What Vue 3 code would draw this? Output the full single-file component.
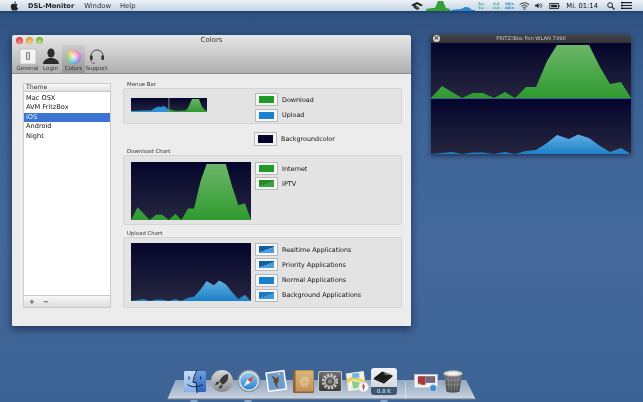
<script setup>
const dl = [[0,55],[11,43],[31,55],[42,50],[52,50],[63,55],[74,49],[84,55],[95,44],[105,44],[116,18],[126,2],[158,2],[169,24],[179,41],[190,39],[200,55]]
const ul = [[0,55],[21,53],[31,55],[42,53.5],[52,53.5],[63,55],[74,53],[84,55],[95,52],[105,51],[116,44],[126,36],[138,40],[147,35.5],[158,39],[169,47],[179,53],[190,49],[200,55]]
const area = (pts) => pts.map((p) => p.join(',')).join(' ')
const dlArea = area(dl)
const ulArea = area(ul)
const tools = [
  { id: 'general', label: 'General' },
  { id: 'login', label: 'Login' },
  { id: 'colors', label: 'Colors', active: true },
  { id: 'support', label: 'Support' }
]
const themes = ['Mac OSX', 'AVM FritzBox', 'iOS', 'Android', 'Night']
const dlLegend = [
  { t: 'Internet', c: 'green' },
  { t: 'IPTV', c: 'green-diag' }
]
const ulLegend = [
  { t: 'Realtime Applications', c: 'blue-diag' },
  { t: 'Priority Applications', c: 'blue-diag' },
  { t: 'Normal Applications', c: 'blue' },
  { t: 'Background Applications', c: 'blue-soft' }
]
</script>

<template>
  <div class="desktop">
    <svg class="defs" width="0" height="0" aria-hidden="true">
      <defs>
        <linearGradient id="night" x1="0" y1="0" x2="0" y2="1"><stop offset="0" stop-color="#05052c"/><stop offset="1" stop-color="#26263f"/></linearGradient>
        <linearGradient id="gr" x1="0" y1="0" x2="0" y2="1"><stop offset="0" stop-color="#6cb668"/><stop offset="1" stop-color="#2f9a30"/></linearGradient>
        <linearGradient id="bl" x1="0" y1="0" x2="0" y2="1"><stop offset="0" stop-color="#62ade2"/><stop offset="1" stop-color="#1c80c8"/></linearGradient>
        <linearGradient id="silver" x1="0" y1="0" x2="0" y2="1"><stop offset="0" stop-color="#d8d8d8"/><stop offset="1" stop-color="#8a8a8a"/></linearGradient>
        <linearGradient id="trash" x1="0" y1="0" x2="0" y2="1"><stop offset="0" stop-color="#777"/><stop offset="1" stop-color="#4a4a4a"/></linearGradient>
        <linearGradient id="faceL" x1="0" y1="0" x2="0" y2="1"><stop offset="0" stop-color="#c6dcf4"/><stop offset="1" stop-color="#86b2e6"/></linearGradient>
        <linearGradient id="faceR" x1="0" y1="0" x2="0" y2="1"><stop offset="0" stop-color="#6d9fe0"/><stop offset="1" stop-color="#2a64bc"/></linearGradient>
        <linearGradient id="sky" x1="0" y1="0" x2="0" y2="1"><stop offset="0" stop-color="#8fd0f4"/><stop offset="1" stop-color="#2a7fd0"/></linearGradient>
        <linearGradient id="book" x1="0" y1="0" x2="0" y2="1"><stop offset="0" stop-color="#dcb67c"/><stop offset="1" stop-color="#c1935a"/></linearGradient>
        <linearGradient id="prefs" x1="0" y1="0" x2="0" y2="1"><stop offset="0" stop-color="#6c6c6c"/><stop offset="1" stop-color="#3c3c3c"/></linearGradient>
      </defs>
    </svg>

    <header class="menubar">
      <div class="menu-left">
        <svg class="apple" viewBox="0 0 14 16"><path d="M10.400 8.500c0-1.700 1.400-2.500 1.500-2.600-.8-1.200-2.100-1.300-2.500-1.400-1-.1-2 .6-2.600.6s-1.400-.6-2.300-.6C3.300 4.500 2.200 5.200 1.600 6.300.3 8.500 1.300 11.800 2.500 13.600c.6.9 1.300 1.900 2.300 1.800.9 0 1.300-.6 2.400-.6s1.400.6 2.400.6 1.600-.9 2.200-1.800c.7-1 1-2 1-2.100-.1 0-2.400-.9-2.400-3zM8.600 3.300C9.100 2.700 9.500 1.800 9.400.9c-.8 0-1.700.5-2.300 1.200C6.600 2.700 6.200 3.500 6.300 4.400c.9.100 1.800-.4 2.300-1.100z" fill="#222"/></svg>
        <span class="app">DSL-Monitor</span>
        <span>Window</span>
        <span>Help</span>
      </div>
      <div class="menu-right">
        <svg class="m-i1" viewBox="0 0 12 8"><path d="M0 3 6 0l6 3-2 1.200L6 2.200 4 3.200l4 2L6 6.500z M2 5l4 3 3-1.800" fill="#222"/></svg>
        <svg class="m-chart" viewBox="0 0 24 11" preserveAspectRatio="none"><polygon points="0,11 0,9 6,8 9,8 12,1 17,1 20,8 24,9 24,11" fill="#35a038"/></svg>
        <svg class="m-chart m-chart2" viewBox="0 0 24 11" preserveAspectRatio="none"><polygon points="0,11 0,10 10,9 14,7 18,7.500 21,10 24,10 24,11" fill="#2a87d0"/></svg>
        <span class="rates rates-a"><i>Rx:</i><i>Tx:</i></span>
        <span class="rates rates-b"><i>0.0</i><i>0.0</i></span>
        <span class="rates rates-c"><i>KB/s</i><i>KB/s</i></span>
        <svg class="m-wifi" viewBox="0 0 12 9"><path d="M.6 3a8 8 0 0 1 10.800 0M2.400 4.900a5.300 5.300 0 0 1 7.200 0M4.200 6.700a2.600 2.600 0 0 1 3.600 0" fill="none" stroke="#222" stroke-width="1"/><circle cx="6" cy="8.200" r=".8" fill="#222"/></svg>
        <svg class="m-vol" viewBox="0 0 9 8"><path d="M0 3h1.500L4 1v6L1.500 5H0z" fill="#222"/><path d="M5 2.500a2 2 0 0 1 0 3M6.500 1.300a3.800 3.800 0 0 1 0 5.400" fill="none" stroke="#222" stroke-width=".8"/></svg>
        <svg class="m-bat" viewBox="0 0 12 7"><rect x=".5" y=".5" width="10" height="6" fill="none" stroke="#222"/><rect x="2" y="2" width="7" height="3" fill="#222"/><rect x="11" y="2.500" width="1" height="2" fill="#222"/></svg>
        <span class="clock">Mi. 01:14</span>
        <svg class="m-search" viewBox="0 0 9 9"><circle cx="3.500" cy="3.500" r="2.700" fill="none" stroke="#222" stroke-width="1.100"/><path d="M5.500 5.500 8.500 8.500" stroke="#222" stroke-width="1.400"/></svg>
        <svg class="m-list" viewBox="0 0 11 7"><path d="M0 .6h11M0 3.500h11M0 6.400h11" stroke="#222" stroke-width="1.100"/><path d="M0 .6h2M0 3.500h2M0 6.400h2" stroke="#000" stroke-width="1.300"/></svg>
      </div>
    </header>

    <section class="window">
      <div class="chrome">
        <div class="titlebar">
          <span class="light red"></span><span class="light amber"></span><span class="light lime"></span>
          <span class="title">Colors</span>
        </div>
        <nav class="toolbar">
          <div v-for="t in tools" :key="t.id" class="tool" :class="{ active: t.active }">
            <svg v-if="t.id === 'general'" class="tool-ic" viewBox="0 0 20 17">
              <rect x="2" y="1" width="16" height="15" rx="1.500" fill="#f3f3f3" stroke="#b0b0b0" stroke-width=".6"/>
              <rect x="8.500" y="4.500" width="3" height="7" rx=".5" fill="#ddd" stroke="#555" stroke-width=".7"/>
            </svg>
            <svg v-else-if="t.id === 'login'" class="tool-ic" viewBox="0 0 20 17">
              <ellipse cx="10" cy="5" rx="3.600" ry="4.600" fill="#2c2c2c"/>
              <path d="M2 16c.4-4 3.400-5 6-6h4c2.600 1 5.600 2 6 6z" fill="#2c2c2c"/>
            </svg>
            <span v-else-if="t.id === 'colors'" class="wheel"></span>
            <svg v-else class="tool-ic" viewBox="0 0 20 17">
              <path d="M4 8a6 6 0 0 1 12 0" fill="none" stroke="#333" stroke-width=".9"/>
              <rect x="3" y="7.500" width="2.600" height="4.500" rx="1" fill="#333"/>
              <rect x="14.400" y="7.500" width="2.600" height="4.500" rx="1" fill="#333"/>
              <path d="M4 12c0 3 2.500 3.500 4 3.500" fill="none" stroke="#444" stroke-width=".7"/>
            </svg>
            <span class="tool-label">{{ t.label }}</span>
          </div>
        </nav>
      </div>

      <div class="content">
        <aside class="theme">
          <div class="theme-head">Theme</div>
          <ul class="theme-list">
            <li v-for="(n, i) in themes" :key="n" :class="{ sel: i === 2 }">{{ n }}</li>
          </ul>
          <div class="theme-foot"><span>+</span><span>−</span></div>
        </aside>

        <div class="settings">
          <div class="group-label">Menue Bar</div>
          <div class="group group-menu">
            <div class="preview">
              <svg class="mini" viewBox="0 0 76 14" preserveAspectRatio="none">
                <rect width="76" height="14" fill="url(#night)"/>
                <polygon points="0,14 0,13 12,12.500 20,12.500 24,10 27,8.500 30,9 33,8 36,10 38,12.500 38,14" fill="#2f8ed6"/>
                <rect x="37.500" width=".8" height="14" fill="#9a9a9a"/>
                <polygon points="38,14 38,11 41,12 45,13 50,12.500 55,12.500 58,8 61,1 68,1 71,9 74,12 76,13 76,14" fill="url(#gr)"/>
              </svg>
            </div>
            <div class="legend legend-menu">
              <div class="item"><span class="well"><i class="green"></i></span>Download</div>
              <div class="item"><span class="well"><i class="blue"></i></span>Upload</div>
            </div>
          </div>

          <div class="item bg-row"><span class="well tall"><i class="night"></i></span>Backgroundcolor</div>

          <div class="group-label">Download Chart</div>
          <div class="group group-dl">
            <svg class="chart" viewBox="0 0 200 55" preserveAspectRatio="none">
              <rect width="200" height="55" fill="url(#night)"/>
              <polygon :points="dlArea" fill="url(#gr)"/>
            </svg>
            <div class="legend legend-dl">
              <div v-for="l in dlLegend" :key="l.t" class="item"><span class="well"><i :class="l.c"></i></span>{{ l.t }}</div>
            </div>
          </div>

          <div class="group-label">Upload Chart</div>
          <div class="group group-ul">
            <svg class="chart" viewBox="0 0 200 55" preserveAspectRatio="none">
              <rect width="200" height="55" fill="url(#night)"/>
              <polygon :points="ulArea" fill="url(#bl)"/>
            </svg>
            <div class="legend legend-ul">
              <div v-for="l in ulLegend" :key="l.t" class="item"><span class="well"><i :class="l.c"></i></span>{{ l.t }}</div>
            </div>
          </div>
        </div>
      </div>
    </section>

    <section class="float">
      <div class="float-title">
        <span class="close">×</span>
        <span>FRITZ!Box Fon WLAN 7390</span>
      </div>
      <svg class="float-chart" viewBox="0 0 200 55" preserveAspectRatio="none">
        <rect width="200" height="55" fill="url(#night)"/>
        <polygon :points="dlArea" fill="url(#gr)"/>
      </svg>
      <svg class="float-chart" viewBox="0 0 200 55" preserveAspectRatio="none">
        <rect width="200" height="55" fill="url(#night)"/>
        <polygon :points="ulArea" fill="url(#bl)"/>
      </svg>
    </section>

    <footer class="dock">
      <div class="shelf"></div>
      <div class="dock-icons">
        <svg class="ic" viewBox="0 0 24 24">
          <rect x="1" y="2" width="22" height="21" rx="1.500" fill="url(#faceR)"/>
          <path d="M2.500 2H14c-2.500 5-3.500 8-4 12h3c0 3 .2 6 .8 9H2.500A1.500 1.500 0 0 1 1 21.500v-18A1.500 1.500 0 0 1 2.500 2z" fill="url(#faceL)"/>
          <path d="M14 1c-2.500 5-3.500 8-4 12.500h3.200c0 3.500.2 7 1 10.500M6 7.500v3M17.500 7.500v3M4.500 15.500c4 3 10 3 15.500 0" fill="none" stroke="#15233c" stroke-width="1"/>
        </svg>
        <svg class="ic" viewBox="0 0 24 24">
          <circle cx="12" cy="12" r="11" fill="url(#silver)"/>
          <path d="M18 5c-4 .6-7.200 3.400-8.500 7.500l3 3c4-1.300 6.400-5 5.500-10.500zM9.500 12.500 6.500 13l-1.500 3 3.200-.6zM12.500 15.500 12 18.500l-3 1.500.6-3.200zM8 16.500 5.500 19" fill="#3a3a3a"/>
        </svg>
        <svg class="ic" viewBox="0 0 24 24">
          <circle cx="12" cy="12" r="11.300" fill="#8d9298"/>
          <circle cx="12" cy="12" r="10" fill="#e3e6e9"/>
          <circle cx="12" cy="12" r="8.600" fill="url(#sky)"/>
          <path d="M17.500 6.500 13.500 13.500 6.500 17.500 10.500 10.500z" fill="#f3f3f3"/>
          <path d="M17.500 6.500 10.500 10.500 13.500 13.500z" fill="#e0403a"/>
        </svg>
        <svg class="ic" viewBox="0 0 24 24">
          <g transform="rotate(-8 12 12)">
            <rect x="2.500" y="2" width="19.500" height="20" fill="#fdfdfd"/>
            <rect x="4" y="3.500" width="16.500" height="17" fill="#6f9ccc"/>
            <path d="M8 6c2 1 3.500 2.500 4.200 4l3-2.500-.8 5-2 3.200 1 3.500-2-1.800-1-3.400-1-1.500.8-1.800z" fill="#5e472e"/>
            <circle cx="16" cy="5.500" r="1" fill="#e7c84c"/>
          </g>
        </svg>
        <svg class="ic" viewBox="0 0 24 24">
          <rect x="2" y="1" width="21" height="23" rx="1.500" fill="#8d6230"/>
          <rect x="4.500" y="1.500" width="18" height="21" rx="1" fill="url(#book)"/>
          <text x="13.500" y="15.500" class="at">@</text>
        </svg>
        <svg class="ic" viewBox="0 0 24 24">
          <rect x="0" y="2" width="24" height="21" rx="2" fill="#c7c7c7"/>
          <rect x="1" y="3" width="22" height="19" rx="1.500" fill="url(#prefs)"/>
          <circle cx="12" cy="12.500" r="6.800" fill="none" stroke="#c9c9c9" stroke-width="2.600" stroke-dasharray="2.200 1.400"/>
          <circle cx="12" cy="12.500" r="5" fill="none" stroke="#b5b5b5" stroke-width="1.400"/>
          <circle cx="12" cy="12.500" r="2.200" fill="#8a8a8a"/>
        </svg>
        <svg class="ic" viewBox="0 0 24 24">
          <g transform="rotate(-8 12 12)">
            <rect x="2" y="3" width="18" height="18" fill="#f3efe2"/>
            <path d="M2 9l6-2 12 5v3L8 10l-6 3z" fill="#ecd24e"/>
            <path d="M7 11l8 3v5H7z" fill="#8ccf8a"/>
            <path d="M8 4h7v5l-7-.5z" fill="#6cb7e6"/>
          </g>
          <circle cx="18.500" cy="18" r="5" fill="#f6f6f6" stroke="#c9c9c9" stroke-width=".5"/>
          <path d="M18.500 13.800l1.300 4.200h-2.600z" fill="#d83a30"/>
          <path d="M18.500 22.200l-1.300-4.200h2.600z" fill="#8b8b8b"/>
        </svg>
        <div class="dsl">
          <svg class="dsl-ic" viewBox="0 0 26 18"><path d="M2 10 11 3l11 4-9 7.500z" fill="#1c1c1c"/><path d="M2 10l11 4.500V16L2 11.500zM13 14.500 22 7v1.700L13 16z" fill="#000"/><path d="M12 5.200h6l3 1.300-6 .2z" fill="#888"/></svg>
          <span class="dsl-rate">0.8 K</span>
        </div>
        <span class="sep"></span>
        <svg class="ic" viewBox="0 0 25 24">
          <rect x=".5" y="5" width="24" height="14" fill="#f4f4f4" stroke="#c4c4c4" stroke-width=".5"/>
          <rect x="4" y="7" width="8" height="9" fill="#a8383a"/>
          <rect x="12" y="7" width="10" height="7" fill="#75657f"/>
          <circle cx="5.500" cy="16" r="1.500" fill="#e8e8e8"/>
          <circle cx="20" cy="19.500" r="3.800" fill="#3f8fd4" stroke="#dbe7f3" stroke-width=".8"/>
        </svg>
        <svg class="ic" viewBox="0 0 24 24">
          <path d="M3 5 5.500 22.500c2.200 1.300 10.800 1.300 13 0L21 5z" fill="url(#trash)"/>
          <path d="M7 7l1 15M10 7.500l.5 15M14 7.500l-.5 15M17 7l-1 15M4 10c5 2 11 2 16 0M5 15c4.500 1.500 9.500 1.500 14 0" stroke="#9a9a9a" stroke-width=".6" fill="none"/>
          <ellipse cx="12" cy="4.500" rx="9.500" ry="3" fill="#d8d8d8" stroke="#888" stroke-width=".5"/>
          <ellipse cx="12" cy="4.500" rx="6" ry="1.500" fill="#f2f2f2"/>
        </svg>
      </div>
    </footer>
    <div class="lamps">
      <span></span><span></span><span></span>
    </div>
  </div>
</template>

<style>
html, body { margin: 0; padding: 0; overflow: hidden; }
</style>

<style scoped>
.desktop {
  position: relative;
  width: 643px;
  height: 402px;
  overflow: hidden;
  background: linear-gradient(180deg, #2e5080 0%, #3d6497 28%, #44699a 60%, #3d6394 100%);
  font-family: "DejaVu Sans", "Liberation Sans", sans-serif;
  color: #111;
  filter: blur(.4px);
}
.defs { position: absolute; }

.menubar {
  height: 11px;
  display: flex;
  justify-content: space-between;
  align-items: center;
  background: linear-gradient(180deg, #eef2f7, #c3d3e3);
  box-shadow: 0 1px 3px rgba(10, 30, 60, .55);
  font-size: 6.800px;
  position: relative;
}
.menu-left { display: flex; align-items: center; padding-left: 10px; gap: 9px; color: #333; }
.apple { width: 9px; height: 10px; }
.app { font-weight: 700; font-size: 6.600px; color: #222; margin-right: 1px; }
.menu-right { display: flex; align-items: center; padding-right: 11px; height: 11px; }
.m-i1 { width: 12px; height: 8px; }
.m-chart { width: 24px; height: 11px; margin-left: 3px; }
.m-chart2 { margin-left: 1px; }
.rates { display: flex; flex-direction: column; font-size: 3.400px; line-height: 4px; font-weight: 700; }
.rates i { font-style: normal; }
.rates-a { color: #3aa878; margin-left: 3px; width: 10px; }
.rates-b { color: #3aa878; margin-left: 5px; width: 9px; }
.rates-c { color: #2a87b8; margin-left: 3px; width: 11px; }
.m-wifi { width: 11px; height: 8px; margin-left: 3px; }
.m-vol { width: 8px; height: 7px; margin-left: 5px; }
.m-bat { width: 11px; height: 6px; margin-left: 6px; }
.clock { font-size: 6.800px; margin-left: 6px; white-space: nowrap; }
.m-search { width: 8px; height: 8px; margin-left: 9px; }
.m-list { width: 11px; height: 7px; margin-left: 6px; }

.window {
  position: absolute;
  left: 12px;
  top: 35px;
  width: 399px;
  height: 291px;
  background: #ececec;
  border-radius: 3px 3px 1px 1px;
  box-shadow: 0 3px 9px rgba(5, 15, 40, .6);
  overflow: hidden;
}
.chrome {
  height: 39px;
  background: linear-gradient(180deg, #e7e7e7, #aeaeae);
  border-bottom: 1px solid #8f8f8f;
  box-sizing: border-box;
}
.titlebar { position: relative; height: 10px; display: flex; align-items: center; gap: 3px; padding-left: 3.500px; }
.light { width: 7px; height: 7px; border-radius: 50%; }
.red { background: radial-gradient(circle at 50% 70%, #f88 0, #d9403c 70%); }
.amber { background: radial-gradient(circle at 50% 70%, #fc9 0, #d99a30 70%); }
.lime { background: radial-gradient(circle at 50% 70%, #bfe89a 0, #6aaa3c 70%); }
.title { position: absolute; left: 0; right: 0; text-align: center; font-size: 7px; color: #333; }
.toolbar { display: flex; padding-left: 4px; height: 28px; }
.tool {
  width: 23px;
  display: flex;
  flex-direction: column;
  align-items: center;
  padding-top: 3px;
  box-sizing: border-box;
}
.tool.active { background: linear-gradient(180deg, rgba(0,0,0,.05), rgba(0,0,0,.14)); }
.tool-ic { width: 20px; height: 17px; }
.wheel {
  width: 14px;
  height: 14px;
  margin: 1.500px 0;
  border-radius: 50%;
  background:
    radial-gradient(circle, rgba(255,255,255,.85) 0, rgba(255,255,255,.35) 45%, rgba(255,255,255,0) 75%),
    conic-gradient(#f58bb0, #e86bc0 18%, #8a6be0 35%, #4aa8e0 50%, #47d0b0 62%, #7fd24c 74%, #f2d83c 88%, #f58bb0);
}
.tool-label { font-size: 5.600px; line-height: 7px; color: #333; white-space: nowrap; }

.content { display: flex; padding: 7px 0 0 11px; }
.theme {
  width: 88px;
  height: 225px;
  margin-top: 2px;
  box-sizing: border-box;
  border: 1px solid #cbcbcb;
  display: flex;
  flex-direction: column;
  background: #fff;
}
.theme-head {
  height: 7px;
  padding-left: 2px;
  font-size: 6.200px;
  line-height: 6px;
  color: #333;
  background: linear-gradient(180deg, #fafafa, #e2e2e2);
  border-bottom: 1px solid #c8c8c8;
}
.theme-list { list-style: none; margin: 0; padding: 1.500px 0 0; flex: 1; }
.theme-list li { height: 9.600px; line-height: 9.600px; padding-left: 2px; font-size: 6.600px; color: #111; }
.theme-list li.sel { background: #3b74d4; color: #e8f0ff; }
.theme-foot {
  height: 11px;
  display: flex;
  gap: 8px;
  padding-left: 5px;
  align-items: center;
  background: linear-gradient(180deg, #f7f7f7, #dedede);
  border-top: 1px solid #c6c6c6;
  font-size: 7px;
  font-weight: 700;
  color: #444;
}

.settings { margin-left: 12px; width: 279px; }
.group-label { height: 7px; line-height: 7px; padding-left: 4px; font-size: 5.400px; color: #333; }
.group {
  box-sizing: border-box;
  background: #e3e3e3;
  border: 1px solid #d4d4d4;
  border-radius: 2px;
  display: flex;
  padding-left: 7px;
}
.group-menu { height: 36px; }
.preview { width: 120px; padding-top: 9px; }
.mini { width: 76px; height: 14px; display: block; }
.legend { display: flex; flex-direction: column; margin-left: 4px; }
.legend-menu { padding-top: 4px; gap: 2.500px; }
.legend-dl { gap: 2px; }
.legend-ul { gap: 2.300px; }
.item { display: flex; align-items: center; font-size: 6.400px; color: #111; white-space: nowrap; height: 13px; }
.well {
  box-sizing: border-box;
  width: 23px;
  height: 13px;
  margin-right: 4px;
  padding: 2px 3px;
  background: #f6f6f6;
  border: 1px solid #b9b9b9;
  display: block;
  flex: none;
}
.well i { display: block; width: 100%; height: 100%; }
.green { background: #219a25; }
.green-diag { background: linear-gradient(160deg, #1f8f24 50%, #3fa043 50%); }
.blue { background: #1a80d0; }
.blue-diag { background: linear-gradient(160deg, #155d9e 50%, #4a9edb 50%); }
.blue-soft { background: linear-gradient(160deg, #1a78c4 50%, #3f97d8 50%); }
.night { background: #05052c; }
.bg-row { margin: 8px 0 2px 131px; height: 14px; }
.well.tall { height: 14px; }
.group-dl { height: 70px; margin-bottom: 5px; padding-top: 6px; }
.group-ul { height: 71px; padding-top: 5px; }
.chart { width: 120px; height: 58px; display: block; flex: none; }

.float {
  position: absolute;
  left: 431px;
  top: 34px;
  width: 200px;
  height: 120px;
  display: flex;
  flex-direction: column;
  border-radius: 3px 3px 0 0;
  overflow: hidden;
  box-shadow: 0 2px 5px rgba(5, 15, 40, .55);
}
.float-title {
  height: 9px;
  position: relative;
  background: linear-gradient(180deg, #45464c, #33343a);
  color: #c9c9c9;
  font-size: 5.200px;
  line-height: 9px;
  text-align: center;
}
.close {
  position: absolute;
  left: 2px;
  top: 1px;
  width: 7px;
  height: 7px;
  border-radius: 50%;
  background: #d5d5d5;
  color: #333;
  font-size: 7px;
  line-height: 6.500px;
  font-weight: 700;
}
.float-chart { width: 200px; height: 55px; display: block; }
.float-chart:last-child { margin-top: 1px; }

.dock {
  position: absolute;
  left: 167px;
  top: 368px;
  width: 309px;
  height: 34px;
}
.shelf {
  position: absolute;
  left: 0;
  right: 0;
  top: 12px;
  height: 20px;
  background: linear-gradient(180deg, #93a8c2 0, #b9c6d6 70%, #cfd8e2 92%, #5f728c 93%, #5f728c 100%);
  clip-path: polygon(2.800% 0, 96.800% 0, 100% 100%, 0 100%);
}
.dock-icons {
  position: relative;
  display: flex;
  align-items: flex-start;
  padding-left: 16px;
  gap: 3px;
}
.ic { width: 24px; height: 24px; flex: none; margin-top: 1px; }
.at { font-family: "Liberation Sans", sans-serif; font-size: 10px; text-anchor: middle; fill: #eedcb8; }
.dsl {
  width: 26px;
  height: 27px;
  margin-left: -1px;
  border-radius: 3px;
  background: linear-gradient(180deg, #f2f4f7, #c8ccd2);
  display: flex;
  flex-direction: column;
  align-items: center;
  overflow: hidden;
  flex: none;
}
.dsl-ic { width: 24px; height: 18px; flex: none; }
.dsl-rate {
  width: 100%;
  height: 8px;
  margin-top: 1px;
  background: #3d5674;
  color: #e6edf5;
  font-size: 5.400px;
  line-height: 8px;
  text-align: center;
}
.sep { width: 1px; height: 18px; margin: 13px 5px 0; background: rgba(255, 255, 255, .4); flex: none; }
.lamps { position: absolute; left: 0; bottom: 0; width: 100%; height: 2px; }
.lamps span { position: absolute; bottom: 0; width: 8px; height: 2px; border-radius: 50%; background: rgba(190, 220, 250, .6); }
.lamps span:nth-child(1) { left: 190px; }
.lamps span:nth-child(2) { left: 244px; }
.lamps span:nth-child(3) { left: 380px; }
</style>
